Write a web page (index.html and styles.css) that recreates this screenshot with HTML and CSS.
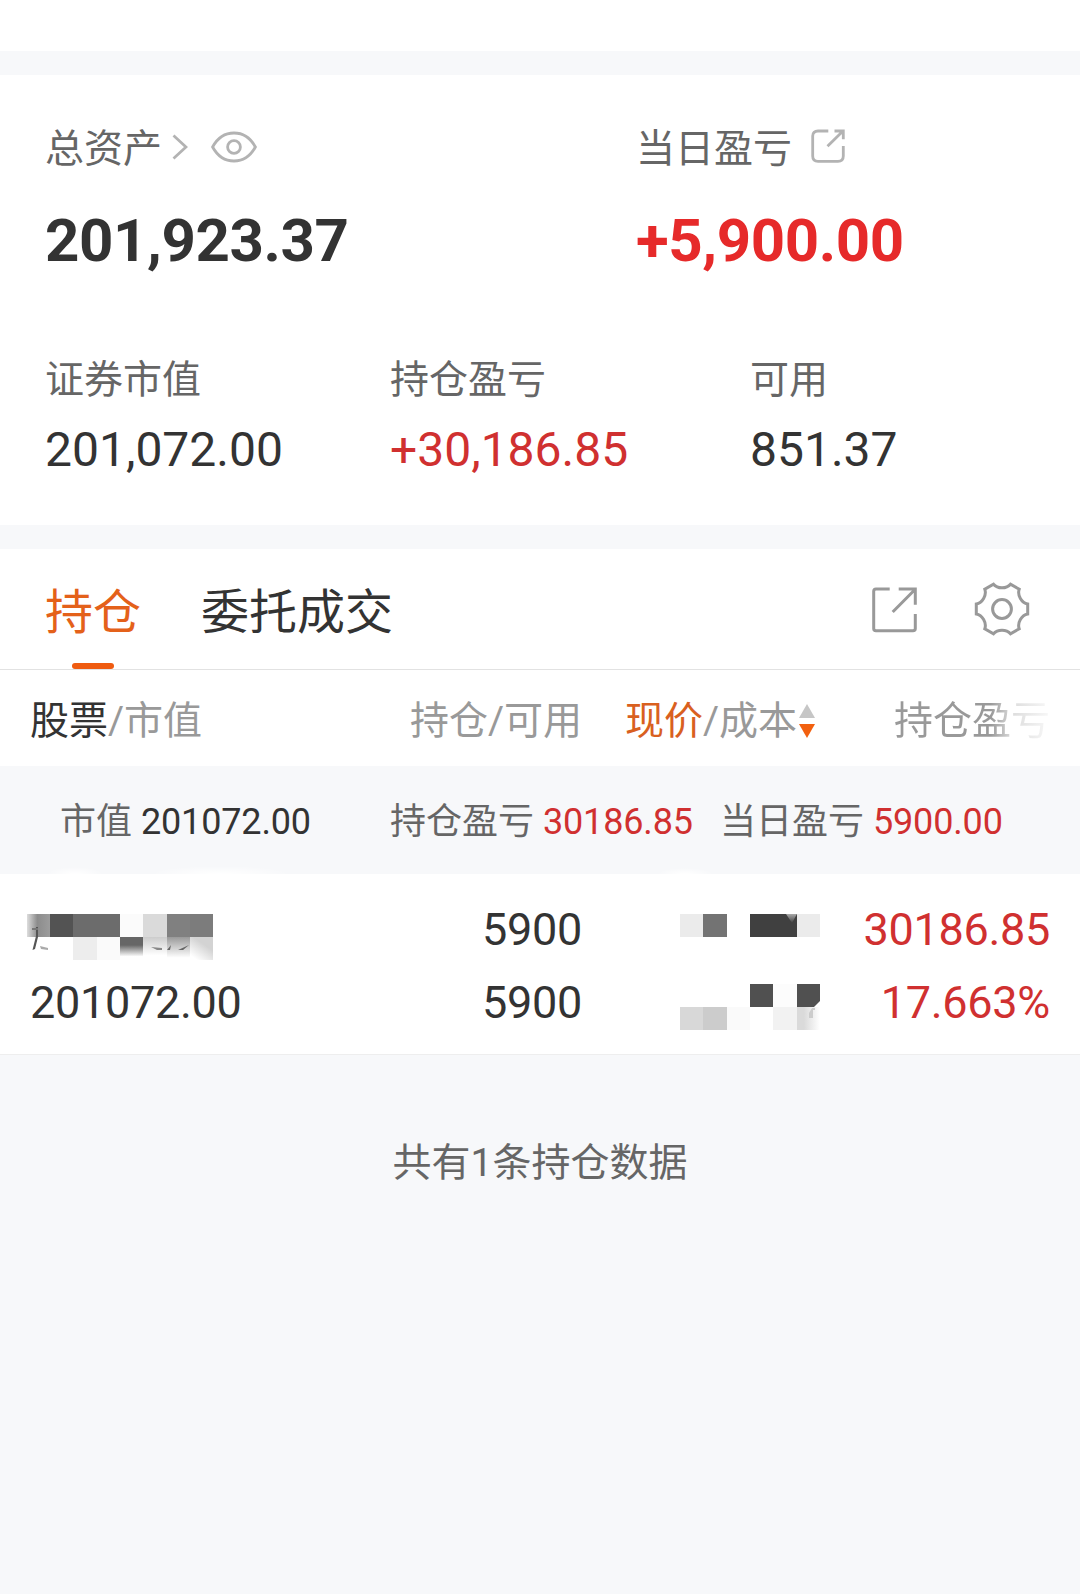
FILE: index.html
```html
<!DOCTYPE html>
<html lang="zh-CN">
<head>
    <meta charset="UTF-8">
    <meta name="viewport" content="width=device-width, initial-scale=1.0">
    <title>持仓</title>
    <link rel="stylesheet" href="styles.css">
</head>
<body>
    <div class="top-bar"></div>

    <div class="assets">
        <div class="assets-main">
            <div>
                <div class="label">
                    总资产
                    <svg class="chevron" width="16" height="26" viewBox="0 0 16 26"><path d="M1.5 1.5L14 13L1.5 24.5"/></svg>
                    <svg class="eye" width="46" height="32" viewBox="0 0 46 32">
                        <path d="M1.6 16C6.5 7 14 2 23 2S39.500 7 44.400 16C39.500 25 32 30 23 30S6.500 25 1.600 16Z"/>
                        <circle cx="23" cy="16" r="6.400"/>
                    </svg>
                </div>
                <div class="total">201,923.37</div>
            </div>
            <div>
                <div class="label">
                    当日盈亏
                    <svg class="share-small" width="34" height="34" viewBox="0 0 34 34">
                        <path d="M17.300 2H7Q1.700 2 1.700 7V27Q1.700 32.300 7 32.300H27Q32.300 32.300 32.300 27V17M16.500 17.200L31.500 2.500M23.500 2H32.300V10.300"/>
                    </svg>
                </div>
                <div class="total up">+5,900.00</div>
            </div>
        </div>
        <div class="assets-detail">
            <div>
                <div class="label">证券市值</div>
                <div class="amount">201,072.00</div>
            </div>
            <div>
                <div class="label">持仓盈亏</div>
                <div class="amount up">+30,186.85</div>
            </div>
            <div>
                <div class="label">可用</div>
                <div class="amount">851.37</div>
            </div>
        </div>
    </div>

    <div class="tabs">
        <div class="tab active">持仓</div>
        <div class="tab">委托成交</div>
        <div class="tools">
            <svg width="47" height="47" viewBox="0 0 47 47">
                <path d="M18.700 3H5Q2.700 3 2.700 5.300V42.400Q2.700 44.700 5 44.700H42Q44.300 44.700 44.300 42.400V28M21.700 26L43.500 4M27.700 3H44.300V18.700"/>
            </svg>
            <svg width="56" height="56" viewBox="-28 -28 56 56">
                <path d="M-8.500 -24.800C-4.500 -20 4.500 -20 8.500 -24.800L17.200 -19.800C15.100 -13.900 19.600 -6.100 25.700 -5V5C19.600 6.100 15.100 13.900 17.200 19.800L8.500 24.800C4.500 20 -4.500 20 -8.500 24.800L-17.200 19.800C-15.100 13.900 -19.600 6.100 -25.700 5V-5C-19.600 -6.100 -15.100 -13.900 -17.200 -19.800Z"/>
                <circle r="9.400"/>
            </svg>
        </div>
    </div>

    <div class="columns head">
        <div><span class="dark">股票</span>/市值</div>
        <div>持仓/可用</div>
        <div class="sort">
            <span><span class="orange">现价</span>/成本</span>
            <svg width="16" height="34" viewBox="0 0 16 34">
                <path class="sort-up" d="M8 0L16 14H0Z"/>
                <path class="sort-down" d="M0 20H16L8 34Z"/>
            </svg>
        </div>
        <div><span class="fade">持仓盈亏</span></div>
    </div>

    <div class="summary">
        <div>市值 <span class="dark">201072.00</span></div>
        <div>持仓盈亏 <span class="up">30186.85</span></div>
        <div>当日盈亏 <span class="up">5900.00</span></div>
    </div>

    <div class="columns position">
        <!-- masked stock name -->
        <div class="name">
            <svg width="187" height="52" viewBox="0 -6 187 52">
                <defs>
                    <linearGradient id="fadeRight"><stop offset="0" stop-color="#ddd"/><stop offset=".45" stop-color="#8c8c8c"/><stop offset="1" stop-color="#9c9c9c"/></linearGradient>
                    <linearGradient id="fadeDown" x2="0" y2="1"><stop offset=".35" stop-color="#666"/><stop offset=".85" stop-color="#fff"/></linearGradient>
                    <linearGradient id="fadeDownLight" x2="0" y2="1"><stop offset="0" stop-color="#ccc"/><stop offset=".8" stop-color="#fff"/></linearGradient>
                    <linearGradient id="fadeDownMid" x2="0" y2="1"><stop offset="0" stop-color="#999"/><stop offset=".9" stop-color="#fff"/></linearGradient>
                    <linearGradient id="fadeCorner" x1="1" y1="0" x2=".3" y2="1"><stop offset=".4" stop-color="#d3d3d3"/><stop offset="1" stop-color="#fff"/></linearGradient>
                </defs>
                <rect x="0" y="0" width="23" height="23" fill="url(#fadeRight)"/>
                <rect x="23" y="0" width="23" height="23" fill="#535353"/>
                <rect x="46" y="0" width="47" height="23" fill="#6c6c6c"/>
                <rect x="93" y="0" width="23" height="23" fill="#fbfbfb"/>
                <rect x="116" y="0" width="24" height="23" fill="#dadada"/>
                <rect x="140" y="0" width="23" height="23" fill="#808080"/>
                <rect x="163" y="0" width="23" height="23" fill="#7c7c7c"/>
                <rect x="46" y="23" width="24" height="23" fill="#ededed"/>
                <rect x="70" y="23" width="23" height="23" fill="#fafafa"/>
                <rect x="93" y="23" width="23" height="23" fill="url(#fadeDown)"/>
                <rect x="116" y="23" width="24" height="23" fill="url(#fadeDownLight)"/>
                <rect x="140" y="23" width="23" height="23" fill="url(#fadeDownMid)"/>
                <rect x="163" y="23" width="23" height="23" fill="url(#fadeCorner)"/>
                <path d="M9 13V22L5.500 36L8 35L11 23V13Z" fill="#555"/>
                <path d="M5 14H11V16H5Z" fill="#777"/>
                <path d="M13 32L21 34V36L14 35Z" fill="#aaa"/>
                <path d="M124 33L135 34V36L130 36Z" fill="#888"/>
                <path d="M140 36L144 31L143 36ZM151 36L162 31L156 36Z" fill="#666"/>
            </svg>
        </div>
        <div>5900</div>
        <!-- masked price and cost -->
        <div class="price">
            <svg width="140" height="118" viewBox="0 -2 140 118">
                <defs>
                    <linearGradient id="fadeLeft"><stop offset=".3" stop-color="#dadada"/><stop offset="1" stop-color="#fff"/></linearGradient>
                    <linearGradient id="shine" x2="0" y2="1"><stop offset="0" stop-color="#aaa"/><stop offset="1" stop-color="#404040"/></linearGradient>
                </defs>
                <rect x="0" y="0" width="23" height="23" fill="#ebebeb"/>
                <rect x="23" y="0" width="24" height="23" fill="#737373"/>
                <rect x="70" y="0" width="47" height="23" fill="#404040"/>
                <rect x="117" y="0" width="23" height="23" fill="#ebebeb"/>
                <path d="M106 0H117L112 9Z" fill="url(#shine)"/>
                <rect x="70" y="70" width="23" height="23" fill="#505050"/>
                <rect x="93" y="70" width="24" height="23" fill="#fcfcfc"/>
                <path d="M117 70H140V87L134 93H117Z" fill="#505050"/>
                <rect x="0" y="93" width="23" height="23" fill="#d8d8d8"/>
                <rect x="23" y="93" width="24" height="23" fill="#ccc"/>
                <rect x="47" y="93" width="23" height="23" fill="#fafafa"/>
                <rect x="93" y="93" width="24" height="23" fill="#f2f2f2"/>
                <rect x="117" y="93" width="23" height="23" fill="url(#fadeLeft)"/>
                <path d="M132 94H135V96H133V104H129V99Z" fill="#ccc"/>
            </svg>
        </div>
        <div class="up">30186.85</div>
        <div class="name">201072.00</div>
        <div>5900</div>
        <div class="up">17.663%</div>
    </div>

    <div class="footer">共有1条持仓数据</div>
</body>
</html>
```

FILE: styles.css
```css
* {
    box-sizing: border-box;
}

body {
    margin: 0;
    min-height: 1594px;
    background-color: #f7f8fa;
    color: #333;
    font-family: Roboto, "Noto Sans CJK SC", sans-serif;
}

svg {
    display: block;
    flex: none;
    fill: none;
    stroke: none;
}

.top-bar {
    height: 51px;
    margin-bottom: 24px;
    background-color: #fff;
}

.up {
    color: #d03030;
}

.dark {
    color: #333;
}

.orange {
    color: #d9601f;
}

/* Assets */
.assets {
    height: 450px;
    margin-bottom: 24px;
    padding: 44px 45px 0;
    background-color: #fff;
}

.assets-main {
    display: grid;
    grid-template-columns: 591px 1fr;
    margin-bottom: 69px;
}

.assets-detail {
    display: grid;
    grid-template-columns: 345px 360px 1fr;
}

.label {
    display: flex;
    align-items: center;
    height: 60px;
    line-height: 60px;
    font-size: 39px;
    color: #666;
}

.label svg {
    stroke: #b3b3b3;
    stroke-width: 2.8;
}

.label .chevron {
    margin: -4px 23px 0 10px;
}

.label .eye {
    margin-top: -5px;
}

.label .share-small {
    margin: -7px 0 0 19px;
}

.total {
    height: 80px;
    margin-top: 22px;
    line-height: 80px;
    font-size: 60px;
    font-weight: bold;
    letter-spacing: -0.4px;
}

.amount {
    height: 60px;
    margin-top: 10px;
    line-height: 60px;
    font-size: 48px;
}

.total.up {
    color: #e62a2a;
}

/* Tabs */
.tabs {
    display: flex;
    align-items: stretch;
    gap: 60px;
    height: 121px;
    padding: 0 50px 0 45px;
    border-bottom: 1px solid #e2e2e2;
    background-color: #fff;
}

.tab {
    position: relative;
    font-size: 48px;
    line-height: 128px;
}

.tab.active {
    color: #e4611a;
}

.tab.active::after {
    content: '';
    position: absolute;
    left: 27px;
    bottom: 0;
    width: 42px;
    height: 6px;
    border-radius: 3px;
    background-color: #ef5b10;
}

.tools {
    display: flex;
    align-items: center;
    gap: 56px;
    margin-left: auto;
}

.tools svg {
    stroke: #999;
    stroke-width: 3;
}

/* Positions */
.columns {
    display: grid;
    grid-template-columns: 250px 302px 238px 230px;
    padding: 0 30px;
    background-color: #fff;
    text-align: right;
}

.head {
    height: 96px;
    font-size: 39px;
    line-height: 102px;
    color: #999;
}

.head > :first-child,
.columns .name {
    text-align: left;
}

.sort {
    display: flex;
    justify-content: flex-end;
    align-items: center;
    gap: 2px;
    padding-right: 5px;
}

.sort-up {
    fill: #c6c6c6;
}

.sort-down {
    fill: #f2600f;
}

.fade {
    background: linear-gradient(to right, #999 62%, #ddd 76%, #f8f8f8 100%);
    -webkit-background-clip: text;
    background-clip: text;
    color: transparent;
}

.summary {
    display: grid;
    grid-template-columns: 330px 330px 1fr;
    height: 108px;
    padding-left: 60px;
    font-size: 36px;
    line-height: 112px;
    color: #666;
    background-image:
        radial-gradient(ellipse 28px 7px at 75px 100%, #fff, transparent),
        radial-gradient(ellipse 70px 8px at 220px 100%, #fff, transparent),
        radial-gradient(ellipse 28px 6px at 685px 100%, #fff, transparent);
}

.summary span {
    letter-spacing: -0.15px;
}

.position {
    grid-template-rows: 73px 73px;
    height: 181px;
    padding-top: 19px;
    border-bottom: 1px solid #eee;
    font-size: 45px;
    line-height: 73px;
    letter-spacing: -0.3px;
}

.name svg {
    margin: 15px 0 0 -3px;
}

.price {
    grid-row: span 2;
}

.price svg {
    margin: 19px 0 0 auto;
}

.footer {
    padding-top: 78px;
    font-size: 39px;
    line-height: 60px;
    color: #666;
    text-align: center;
}
```
